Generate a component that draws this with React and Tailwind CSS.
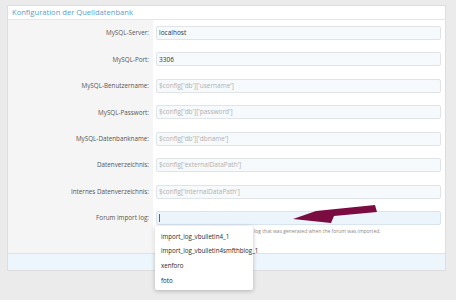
import React from "react";

const rows = [
  { label: "MySQL-Server:", value: "localhost" },
  { label: "MySQL-Port:", value: "3306" },
  { label: "MySQL-Benutzername:", placeholder: "$config['db']['username']" },
  { label: "MySQL-Passwort:", placeholder: "$config['db']['password']" },
  { label: "MySQL-Datenbankname:", placeholder: "$config['db']['dbname']" },
  { label: "Datenverzeichnis:", placeholder: "$config['externalDataPath']" },
  { label: "Internes Datenverzeichnis:", placeholder: "$config['internalDataPath']" },
];

const font = { fontFamily: '"Open Sans", "Noto Sans", sans-serif' };

export default function App() {
  return (
    <div className="w-[456px] h-[300px] bg-[#ebebeb] overflow-hidden relative" style={font}>
      <div className="ml-[7px] mt-[5px] w-[439px] bg-white border border-[#dedede]">
        <div className="h-[14px] border-b border-[#e6e6e6] flex items-center pl-[4px] text-[7.6px] text-[#5b9cc8]">
          Konfiguration der Quelldatenbank
        </div>
        <div className="flex">
          <div className="w-[145px] bg-[#f5f5f5] flex flex-col gap-[12.43px] pt-[6px] pr-[4px] items-end">
            {rows.map((r) => (
              <div key={r.label} className="h-[14px] flex items-center text-[6.3px] text-[#555]">
                {r.label}
              </div>
            ))}
            <div className="h-[14px] flex items-center text-[6.3px] text-[#555]">Forum import log:</div>
            <div className="h-[16px]" />
          </div>
          <div className="flex-1 flex flex-col gap-[12.43px] pt-[6px] pl-[3px] pr-[4px]">
            {rows.map((r) => (
              <div
                key={r.label}
                className="h-[14px] rounded-[2px] border border-[#e1e4e6] bg-[#f6fafc] flex items-center pl-[2px] text-[6.5px]"
              >
                {r.value ? (
                  <span className="text-[#333]">{r.value}</span>
                ) : (
                  <span className="text-[#b0b0b0]">{r.placeholder}</span>
                )}
              </div>
            ))}
            <div className="flex flex-col">
              <div className="h-[14px] rounded-[2px] border border-[#d8e4ee] bg-[#edf5fc] flex items-center pl-[2px]">
                <div className="w-px h-[8px] bg-[#666]" />
              </div>
              <div className="h-[16px] pt-[3px] pl-[98px] text-[5px] text-[#888] whitespace-nowrap">
                log that was generated when the forum was imported.
              </div>
            </div>
          </div>
        </div>
        <div className="h-[17px] bg-[#edf5fd] border-t border-[#dde3e8]" />
      </div>

      <div className="absolute left-[155px] top-[226px] w-[98px] h-[64px] bg-white rounded-[2px] shadow-[0_1px_4px_rgba(0,0,0,0.25)] pt-[3px] flex flex-col text-[6.2px] text-[#2a2a2a]">
        {["import_log_vbulletin4_1", "import_log_vbulletin4smfthblog_1", "xenforo", "foto"].map((t) => (
          <div key={t} className="h-[14.7px] flex items-center pl-[6px]">
            {t}
          </div>
        ))}
      </div>

      <svg className="absolute left-0 top-0" width="456" height="300" viewBox="0 0 456 300">
        <polygon
          points="293,219 316,211 375,205 377,212 334,216 331,223"
          fill="#7b0c42"
        />
      </svg>
    </div>
  );
}
